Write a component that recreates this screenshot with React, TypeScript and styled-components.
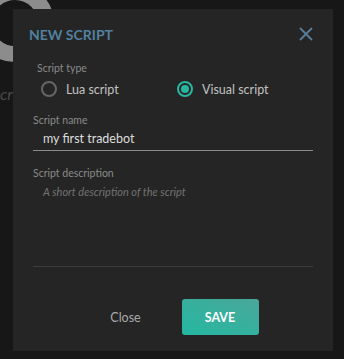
import React from 'react';
import styled, { createGlobalStyle } from 'styled-components';

const GlobalStyle = createGlobalStyle`
	html, body {
		margin: 0;
		padding: 0;
		background: #171717;
		font-family: Lato, "Open Sans", sans-serif;
	}
`

const Page = styled.div`
	position: relative;
	width: 344px;
	height: 359px;
	overflow: hidden;
	background: #171717;
`

const BackLogo = styled.svg`
	position: absolute;
	left: -26px;
	top: -16px;
`

const BackText = styled.span`
	position: absolute;
	left: 0;
	top: 84px;
	font-size: 16px;
	font-style: italic;
	color: #4a4a4a;
`

const Dialog = styled.div`
	position: relative;
	margin: 9px 0 0 13px;
	width: 320px;
	height: 342px;
	background: #252525;
	display: flex;
	flex-direction: column;
`

const Header = styled.div`
	height: 50px;
	display: flex;
	align-items: center;
	justify-content: space-between;
	padding: 0 20px 0 16px;
`

const Title = styled.h2`
	margin: 0;
	font-size: 14px;
	font-weight: 700;
	color: #52809f;
`

const CloseIcon = styled.button`
	border: 0;
	padding: 0;
	background: none;
	width: 14px;
	height: 14px;
	display: flex;
	cursor: pointer;
`

const Body = styled.div`
	padding: 0 20px;
	display: flex;
	flex-direction: column;
`

const Label = styled.div<{ indent?: number }>`
	height: 18px;
	line-height: 18px;
	font-size: 10.5px;
	color: #8a8a8a;
	padding-left: ${p => p.indent || 0}px;
`

const RadioGroup = styled.div`
	display: grid;
	grid-template-columns: 136px 136px;
	padding-left: 8px;
	height: 24px;
	align-items: center;
`

const Option = styled.label`
	display: flex;
	align-items: center;
	gap: 9px;
	font-size: 12.5px;
	color: #c2c2c2;
	cursor: pointer;
`

const Circle = styled.span<{ checked?: boolean }>`
	box-sizing: border-box;
	width: 16px;
	height: 16px;
	border-radius: 50%;
	border: 2px solid ${p => (p.checked ? '#27b6a1' : '#666666')};
	display: flex;
	align-items: center;
	justify-content: center;
	&::after {
		content: '';
		width: 8px;
		height: 8px;
		border-radius: 50%;
		background: ${p => (p.checked ? '#27b6a1' : 'transparent')};
	}
`

const Field = styled.div<{ top: number }>`
	margin-top: ${p => p.top}px;
	display: flex;
	flex-direction: column;
`

const Input = styled.input`
	box-sizing: border-box;
	height: 22px;
	border: 0;
	border-bottom: 1px solid #8a8a8a;
	background: transparent;
	padding: 0 0 3px 10px;
	font-family: Lato, "Open Sans", sans-serif;
	font-size: 12.5px;
	color: #dedede;
	outline: none;
`

const TextArea = styled.textarea`
	box-sizing: border-box;
	height: 85px;
	border: 0;
	border-bottom: 1px solid #3c3c3c;
	background: transparent;
	padding: 2px 0 0 10px;
	resize: none;
	font-family: Lato, "Open Sans", sans-serif;
	font-size: 11px;
	line-height: 16px;
	color: #dedede;
	outline: none;
	&::placeholder {
		color: #727272;
		font-style: italic;
	}
`

const Footer = styled.div`
	margin-top: 32px;
	display: flex;
	justify-content: center;
	gap: 18px;
`

const TextButton = styled.button`
	width: 76px;
	height: 36px;
	border: 0;
	background: none;
	font-family: Lato, "Open Sans", sans-serif;
	font-size: 12.5px;
	color: #a9a9a9;
	cursor: pointer;
`

const SaveButton = styled.button`
	width: 77px;
	height: 36px;
	border: 0;
	border-radius: 3px;
	background: linear-gradient(20deg, #24b8a2 0%, #4aa799 100%);
	font-family: Lato, "Open Sans", sans-serif;
	font-size: 12.5px;
	font-weight: 700;
	color: #ffffff;
	cursor: pointer;
`

export default function App() {
	return (
		<Page>
			<GlobalStyle />
			<BackLogo width="90" height="90" viewBox="0 0 90 90">
				<circle cx="41" cy="39" r="31" fill="none" stroke="#8c8c8c" strokeWidth="16" />
			</BackLogo>
			<BackText>cr</BackText>
			<Dialog>
				<Header>
					<Title>NEW SCRIPT</Title>
					<CloseIcon aria-label="close">
						<svg width="14" height="14" viewBox="0 0 14 14">
							<path d="M1 1 L13 13 M13 1 L1 13" stroke="#587e99" strokeWidth="1.8" />
						</svg>
					</CloseIcon>
				</Header>
				<Body>
					<Label indent={4}>Script type</Label>
					<RadioGroup>
						<Option><Circle />Lua script</Option>
						<Option><Circle checked />Visual script</Option>
					</RadioGroup>
					<Field top={10}>
						<Label>Script name</Label>
						<Input defaultValue="my first tradebot" />
					</Field>
					<Field top={13}>
						<Label>Script description</Label>
						<TextArea placeholder="A short description of the script" />
					</Field>
				</Body>
				<Footer>
					<TextButton>Close</TextButton>
					<SaveButton>SAVE</SaveButton>
				</Footer>
			</Dialog>
		</Page>
	);
}
